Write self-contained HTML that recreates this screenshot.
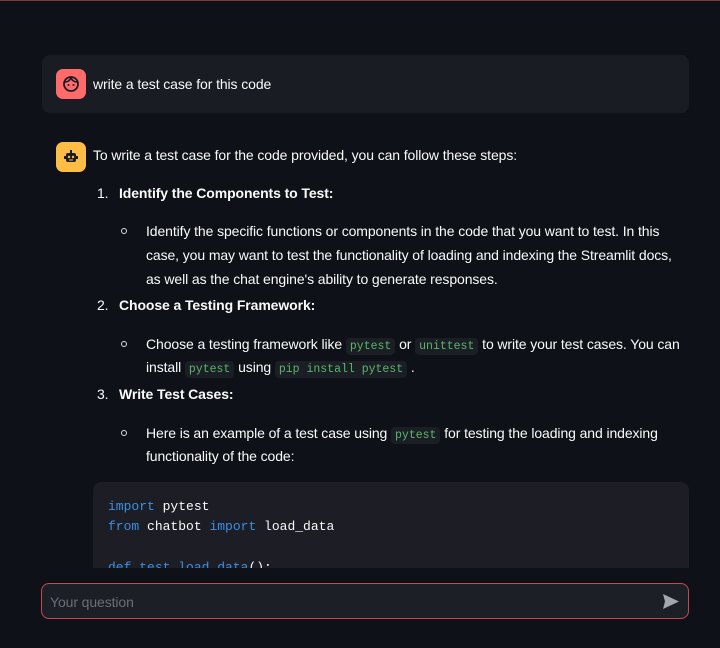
<!DOCTYPE html>
<html><head><meta charset="utf-8"><style>
*{margin:0;padding:0;box-sizing:border-box}
body{width:720px;height:648px;background:#0e1117;font-family:"Liberation Sans",sans-serif;color:#fafafa;position:relative;overflow:hidden;font-size:14px;letter-spacing:-0.1px}
.topline{position:absolute;left:0;top:0;width:720px;height:1px;background:#7a3a3a}
.t{position:absolute;white-space:nowrap;line-height:20px}
.b{font-weight:bold}
.msg{position:absolute;left:42px;top:55px;width:647px;height:58px;background:#1a1c24;border-radius:8px}
.av{position:absolute;width:30px;height:30px;border-radius:7px}
code{font-family:"Liberation Mono",monospace;font-size:11.5px;color:#5ab66b;background:#1b1e25;padding:2px 4px;border-radius:4px;letter-spacing:0}
.bul{position:absolute;width:6px;height:6px;border:1.3px solid #ddd;border-radius:50%}
.code{position:absolute;left:93px;top:482px;width:596px;height:86px;background:#1c1d25;border-radius:8px 8px 0 0;overflow:hidden;font-family:"Liberation Mono",monospace;font-size:13px;letter-spacing:0}
.code div{position:absolute;left:15px;white-space:pre;line-height:20px}
.k{color:#3d8fe0}
.inp{position:absolute;left:41px;top:583px;width:648px;height:36px;border:1px solid #c9484f;border-radius:8px;background:#1d1f27}
</style></head><body>
<div class="topline"></div>
<div class="msg"></div>
<div class="av" style="left:56px;top:69px;background:#ff6b6b">
<svg width="30" height="30" viewBox="0 0 30 30"><circle cx="15" cy="15" r="7" fill="none" stroke="#1a1c24" stroke-width="1.8"/><path d="M9 13 Q13 13 15 9 Q17 13 21 13" fill="none" stroke="#1a1c24" stroke-width="1.6"/><circle cx="12.5" cy="16" r="1" fill="#1a1c24"/><circle cx="17.5" cy="16" r="1" fill="#1a1c24"/></svg></div>
<div class="t" style="left:93px;top:74px">write a test case for this code</div>
<div class="av" style="left:56px;top:142px;background:#ffbd45">
<svg width="30" height="30" viewBox="0 0 30 30"><rect x="10" y="11" width="10" height="9" rx="2" fill="#1a1c24"/><rect x="14" y="8" width="2" height="3" fill="#1a1c24"/><rect x="8" y="14" width="2" height="3" fill="#1a1c24"/><rect x="20" y="14" width="2" height="3" fill="#1a1c24"/><circle cx="13" cy="15" r="1.2" fill="#ffbd45"/><circle cx="17" cy="15" r="1.2" fill="#ffbd45"/><rect x="13" y="17.5" width="4" height="1" fill="#ffbd45"/></svg></div>
<div class="t" style="left:93px;top:145px">To write a test case for the code provided, you can follow these steps:</div>
<div class="t" style="left:97px;top:183px">1.</div><div class="t b" style="left:119px;top:183px">Identify the Components to Test:</div>
<div class="bul" style="left:121px;top:228px"></div>
<div class="t" style="left:146px;top:221px">Identify the specific functions or components in the code that you want to test. In this</div>
<div class="t" style="left:146px;top:245px">case, you may want to test the functionality of loading and indexing the Streamlit docs,</div>
<div class="t" style="left:146px;top:269px">as well as the chat engine's ability to generate responses.</div>
<div class="t" style="left:97px;top:295px">2.</div><div class="t b" style="left:119px;top:295px">Choose a Testing Framework:</div>
<div class="bul" style="left:121px;top:341px"></div>
<div class="t" style="left:146px;top:334px">Choose a testing framework like <code>pytest</code> or <code>unittest</code> to write your test cases. You can</div>
<div class="t" style="left:146px;top:357px">install <code>pytest</code> using <code>pip install pytest</code> .</div>
<div class="t" style="left:97px;top:384px">3.</div><div class="t b" style="left:119px;top:384px">Write Test Cases:</div>
<div class="bul" style="left:121px;top:430px"></div>
<div class="t" style="left:146px;top:423px">Here is an example of a test case using <code>pytest</code> for testing the loading and indexing</div>
<div class="t" style="left:146px;top:446px">functionality of the code:</div>
<div class="code">
<div style="top:15px"><span class="k">import</span> pytest</div>
<div style="top:35px"><span class="k">from</span> chatbot <span class="k">import</span> load_data</div>
<div style="top:76px"><span class="k">def</span> <span class="k">test_load_data</span>():</div>
</div>
<div class="inp"><div class="t" style="left:8px;top:8px;color:#6b6e78;font-size:14px">Your question</div>
<svg style="position:absolute;left:620px;top:9px" width="18" height="17" viewBox="0 0 18 17"><path d="M1 1 L17 8.5 L1 16 L3 8.5 Z" fill="#a3a6ad"/></svg></div>
</body></html>
